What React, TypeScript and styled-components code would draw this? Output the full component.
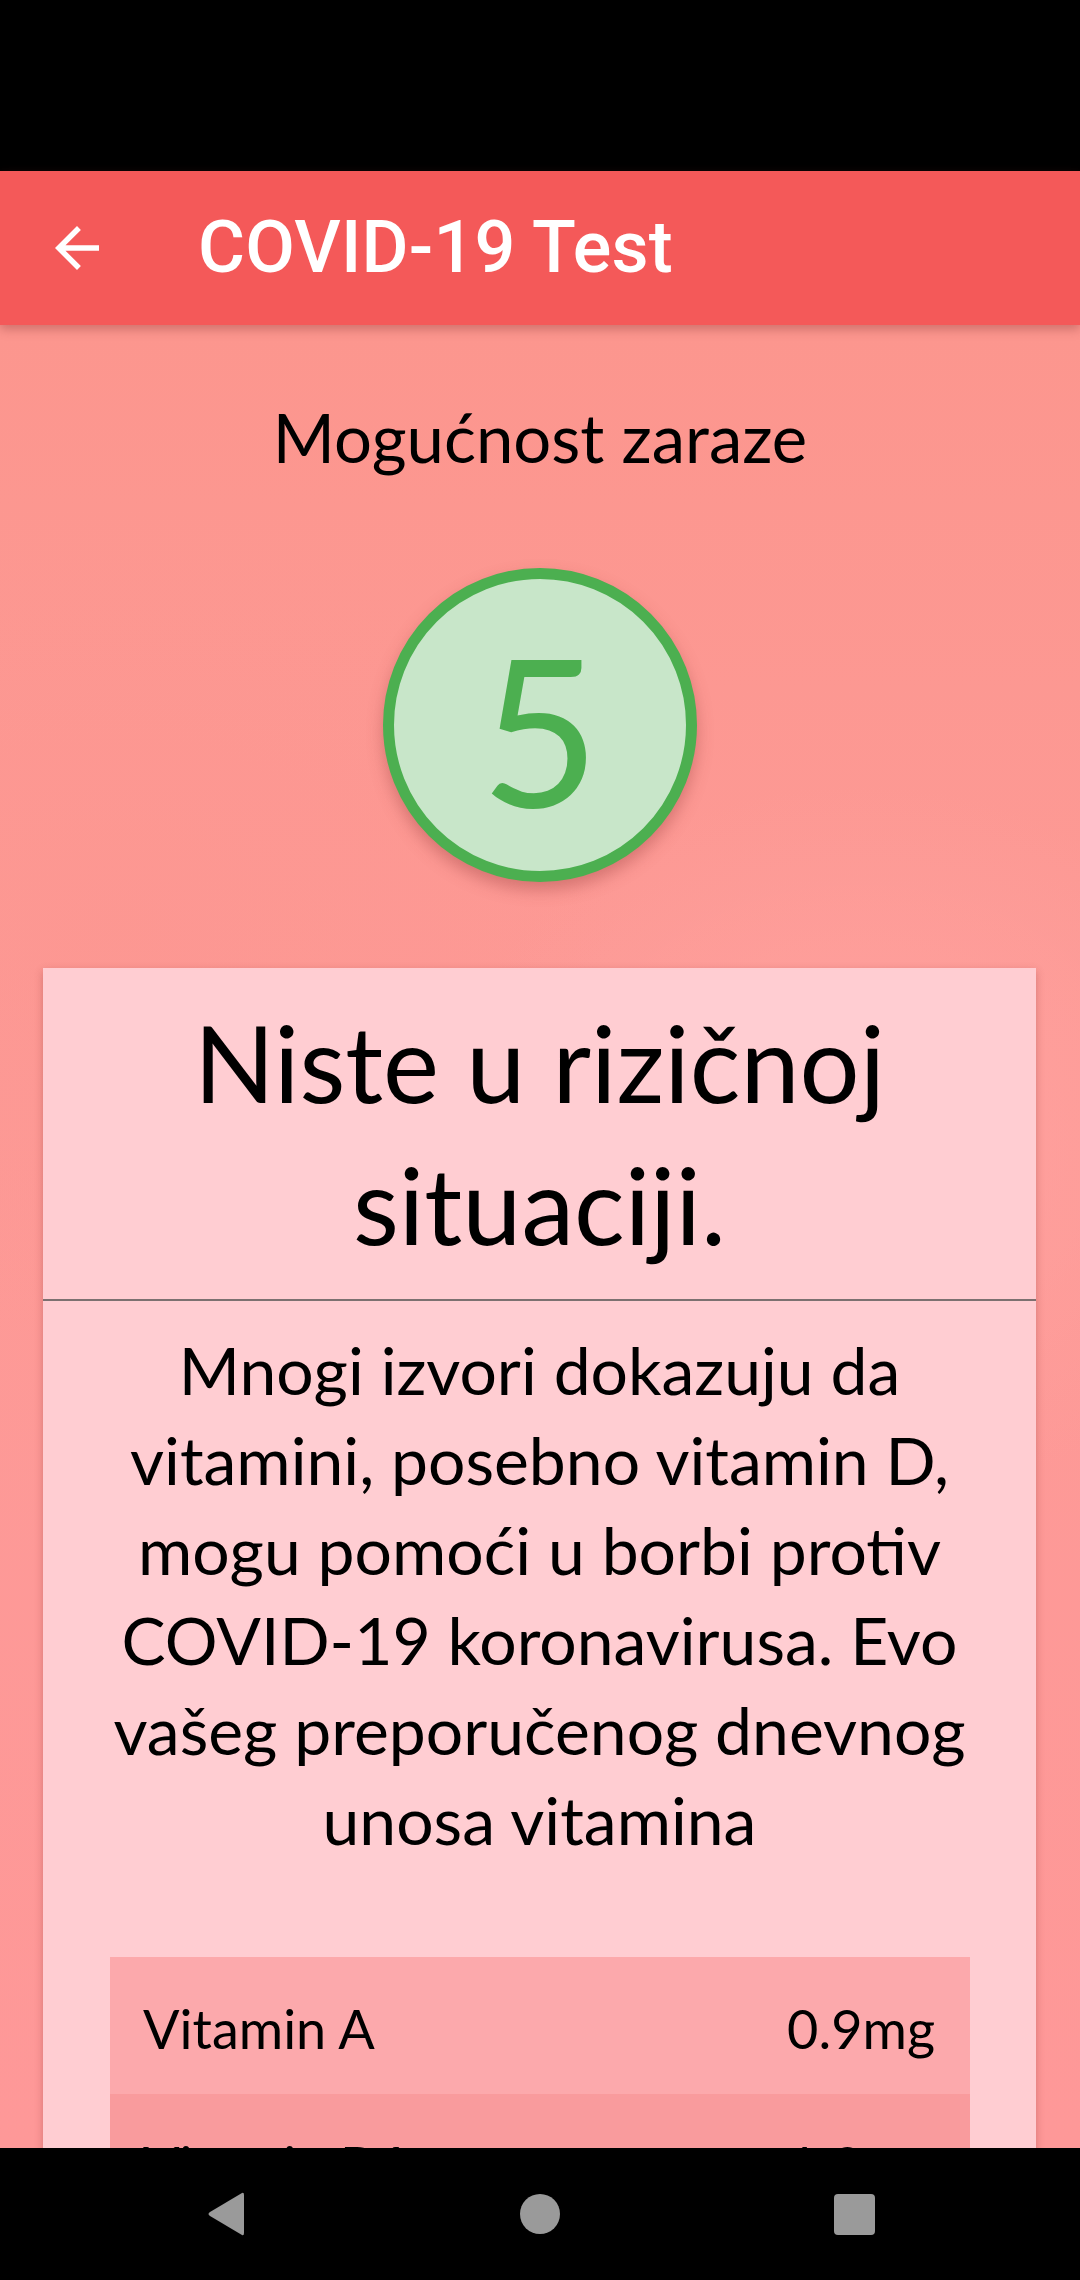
import React from "react";
import styled, { createGlobalStyle } from "styled-components";

const Global = createGlobalStyle`
  html, body { margin: 0; padding: 0; background: #000; }
  body { font-family: "Lato", "Open Sans", sans-serif; }
  * { box-sizing: border-box; }
`;

const Screen = styled.div`
  width: 1080px;
  height: 2280px;
  display: flex;
  flex-direction: column;
  overflow: hidden;
  background: #000;
`;

const StatusBar = styled.div`
  height: 171px;
  flex: none;
  background: #000;
`;

const Body = styled.div`
  position: relative;
  flex: 1;
  display: flex;
  flex-direction: column;
  overflow: hidden;
  background:
    radial-gradient(ellipse 420px 360px at 860px 820px, rgba(255, 163, 160, 0.9), rgba(255, 163, 160, 0) 100%),
    radial-gradient(ellipse 500px 420px at 120px 600px, rgba(252, 150, 144, 0.6), rgba(252, 150, 144, 0) 100%),
    linear-gradient(180deg, #fc968e 0%, #fd9a96 40%, #fe9898 100%);
`;

const AppBar = styled.header`
  height: 154px;
  flex: none;
  display: flex;
  align-items: center;
  background: #f45959;
  box-shadow: 0 4px 10px rgba(120, 40, 40, 0.35);
  position: relative;
  z-index: 2;
`;

const BackButton = styled.button`
  width: 66px;
  height: 66px;
  margin-left: 44px;
  margin-right: 88px;
  padding: 0;
  border: 0;
  background: transparent;
  display: flex;
  align-items: center;
  justify-content: center;
`;

const AppTitle = styled.h1`
  margin: 0;
  font-family: "Roboto", sans-serif;
  font-weight: 500;
  font-size: 72px;
  line-height: 154px;
  color: #fff;
  letter-spacing: 0.2px;
`;

const Content = styled.main`
  flex: 1;
  display: flex;
  flex-direction: column;
  align-items: center;
  overflow: hidden;
`;

const Heading = styled.h2`
  margin: 67px 0 0;
  font-weight: 400;
  font-size: 67px;
  line-height: 90px;
  color: #000;
  text-align: center;
`;

const ScoreCircle = styled.div<{ $ring: string; $fill: string }>`
  margin-top: 86px;
  width: 314px;
  height: 314px;
  flex: none;
  border-radius: 50%;
  border: 11px solid ${(p) => p.$ring};
  background: ${(p) => p.$fill};
  display: flex;
  align-items: center;
  justify-content: center;
  box-shadow: 0 8px 16px rgba(140, 50, 50, 0.35);
`;

const ScoreValue = styled.span<{ $color: string }>`
  font-size: 206px;
  font-weight: 400;
  line-height: 1.2;
  color: ${(p) => p.$color};
  padding-top: 6px;
`;

const Card = styled.section`
  margin: 86px 44px 0 43px;
  align-self: stretch;
  background: #ffcdd2;
  box-shadow: 0 3px 8px rgba(120, 40, 40, 0.3);
  flex: none;
`;

const CardTitle = styled.h3`
  margin: 0;
  padding: 23px 20px 24px;
  font-weight: 400;
  font-size: 106px;
  line-height: 142px;
  text-align: center;
  color: #000;
  border-bottom: 2px solid #7c7070;
`;

const CardText = styled.p`
  margin: 0;
  padding: 24px 20px 0;
  font-size: 66px;
  line-height: 90px;
  text-align: center;
  color: #000;
`;

const Table = styled.div`
  margin: 92px 66px 0 67px;
  display: flex;
  flex-direction: column;
`;

const Row = styled.div<{ $bg: string }>`
  height: 137px;
  display: flex;
  align-items: center;
  justify-content: space-between;
  padding: 6px 35px 0 33px;
  background: ${(p) => p.$bg};
  font-size: 54px;
  color: #000;
`;

const NavBar = styled.nav`
  height: 132px;
  flex: none;
  background: #000;
  display: flex;
  align-items: center;
  justify-content: center;
  position: relative;
  z-index: 3;
`;

const NavSlot = styled.div`
  width: 314px;
  display: flex;
  justify-content: center;
`;

const vitamins = [
  { name: "Vitamin A", amount: "0.9mg", bg: "#fca9ac" },
  { name: "Vitamin B6", amount: "1.3mg", bg: "#f99b9d" },
];

export default function App() {
  return (
    <>
      <Global />
      <Screen>
        <StatusBar />
        <AppBar>
          <BackButton aria-label="Nazad">
            <svg width="66" height="66" viewBox="0 0 24 24">
              <path fill="#fff" d="M20 11H7.83l5.59-5.59L12 4l-8 8 8 8 1.41-1.41L7.83 13H20v-2z" />
            </svg>
          </BackButton>
          <AppTitle>COVID-19 Test</AppTitle>
        </AppBar>
        <Body>
          <Content>
            <Heading>Mogućnost zaraze</Heading>
            <ScoreCircle $ring="#4caf50" $fill="#c8e6c9">
              <ScoreValue $color="#4caf50">5</ScoreValue>
            </ScoreCircle>
            <Card>
              <CardTitle>
                Niste u rizičnoj
                <br />
                situaciji.
              </CardTitle>
              <CardText>
                Mnogi izvori dokazuju da
                <br />
                vitamini, posebno vitamin D,
                <br />
                mogu pomoći u borbi protiv
                <br />
                COVID-19 koronavirusa. Evo
                <br />
                vašeg preporučenog dnevnog
                <br />
                unosa vitamina
              </CardText>
              <Table>
                {vitamins.map((v) => (
                  <Row key={v.name} $bg={v.bg}>
                    <span>{v.name}</span>
                    <span>{v.amount}</span>
                  </Row>
                ))}
              </Table>
            </Card>
          </Content>
        </Body>
        <NavBar>
          <NavSlot>
            <svg width="40" height="46" viewBox="0 0 40 46">
              <path d="M36 2 Q38 1 38 4 L38 42 Q38 45 36 44 L4 25 Q1 23 4 21 Z" fill="#9a9a9a" />
            </svg>
          </NavSlot>
          <NavSlot>
            <svg width="40" height="40" viewBox="0 0 40 40">
              <circle cx="20" cy="20" r="20" fill="#9a9a9a" />
            </svg>
          </NavSlot>
          <NavSlot>
            <svg width="41" height="41" viewBox="0 0 41 41">
              <rect x="0" y="0" width="41" height="41" rx="4" fill="#9a9a9a" />
            </svg>
          </NavSlot>
        </NavBar>
      </Screen>
    </>
  );
}
